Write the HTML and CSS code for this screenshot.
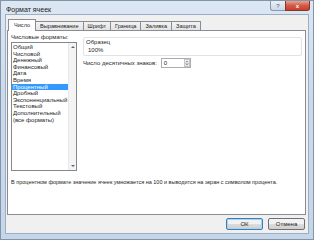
FILE: index.html
```html
<!DOCTYPE html>
<html lang="ru">
<head>
<meta charset="utf-8">
<link rel="stylesheet" href="styles.css">
</head>
<body>
<div class="window">
  <div class="titlebar">
    <span class="title">Формат ячеек</span>
    <div class="caption-btns">
      <span class="cb help">?</span>
      <span class="cb close">x</span>
    </div>
  </div>
  <div class="client">
    <div class="tabs">
      <div class="tab active">Число</div>
      <div class="tab">Выравнивание</div>
      <div class="tab">Шрифт</div>
      <div class="tab">Граница</div>
      <div class="tab">Заливка</div>
      <div class="tab">Защита</div>
    </div>
    <div class="panel">
      <div class="panel-main">
        <div class="left-col">
          <div class="label">Числовые форматы:</div>
          <div class="listbox">
            <ul class="items">
              <li>Общий</li>
              <li>Числовой</li>
              <li>Денежный</li>
              <li>Финансовый</li>
              <li>Дата</li>
              <li>Время</li>
              <li class="selected">Процентный</li>
              <li>Дробный</li>
              <li>Экспоненциальный</li>
              <li>Текстовый</li>
              <li>Дополнительный</li>
              <li>(все форматы)</li>
            </ul>
            <div class="vscroll">
              <span class="arr up"></span>
              <span class="arr down"></span>
            </div>
          </div>
        </div>
        <div class="right-col">
          <div class="sample">
            <div class="sample-title">Образец</div>
            <div class="sample-value">100%</div>
          </div>
          <div class="decimals">
            <span class="dec-label">Число десятичных знаков:</span>
            <div class="spin">
              <span class="spin-val">0</span>
              <div class="spin-btns">
                <span class="sb"><span class="tri-up"></span></span>
                <span class="sb"><span class="tri-down"></span></span>
              </div>
            </div>
          </div>
        </div>
      </div>
      <div class="desc">В процентном формате значение ячеек умножается на 100 и выводится на экран с символом процента.</div>
    </div>
    <div class="buttons">
      <button class="btn ok">ОК</button>
      <button class="btn">Отмена</button>
    </div>
  </div>
</div>
</body>
</html>
```

FILE: styles.css
```css
* { box-sizing: border-box; margin: 0; padding: 0; }
html, body { width: 314px; height: 240px; overflow: hidden; background: #fff; }
body { font-family: "Liberation Sans", Arial, sans-serif; font-size: 6px; color: #262626; }

.window {
  width: 314px;
  height: 240px;
  display: flex;
  flex-direction: column;
  background: linear-gradient(#dce7f4, #cbdaeb 40%, #c6d6e9);
  border: 1px solid #8393a8;
  padding: 0 4px 5px 4px;
}

.titlebar {
  height: 14px;
  display: flex;
  align-items: flex-start;
}
.title {
  font-size: 7px;
  line-height: 7px;
  margin: 5px 0 0 1px;
  color: #1a1a1a;
}
.caption-btns {
  margin-left: auto;
  margin-right: -1px;
  display: flex;
}
.cb {
  height: 10px;
  display: flex;
  align-items: center;
  justify-content: center;
  font-size: 6px;
  line-height: 6px;
  border: 1px solid #8a99ad;
  border-top: none;
}
.help {
  width: 15px;
  background: linear-gradient(#e9f0f8, #cbd9ea);
  color: #4a5a70;
  border-radius: 0 0 0 3px;
  border-right: none;
}
.close {
  width: 25px;
  background: linear-gradient(#e9a392, #d25a46 50%, #c8402c);
  color: #fff;
  border-color: #8a3426;
  border-radius: 0 0 3px 0;
  font-weight: bold;
}

.client {
  flex: 1;
  display: flex;
  flex-direction: column;
  background: #f0f0f0;
  border: 1px solid #9aaec6;
  padding: 4px 3px 3px 1px;
}

.tabs {
  display: flex;
  height: 11px;
  align-items: flex-end;
  padding-left: 1px;
  position: relative;
  z-index: 1;
}
.tab {
  height: 9px;
  line-height: 8px;
  padding: 0 4px;
  border: 1px solid #898c95;
  border-bottom: none;
  border-left: none;
  background: linear-gradient(#f3f3f3, #e3e3e3);
  white-space: nowrap;
  font-size: 5.6px;
}
.tab.active {
  height: 12px;
  margin-bottom: -1px;
  background: #fff;
  border-left: 1px solid #898c95;
  padding: 0 5px;
  line-height: 10px;
}

.panel {
  height: 185px;
  background: #fff;
  border: 1px solid #898c95;
  margin-right: -1px;
  padding: 3px 3px 0 3px;
  display: flex;
  flex-direction: column;
}
.panel-main {
  display: flex;
  gap: 6px;
}
.left-col { width: 66px; }
.label { line-height: 7px; height: 8px; }

.listbox {
  height: 129px;
  border: 1px solid #828790;
  display: flex;
}
.items {
  list-style: none;
  flex: 1;
  padding-top: 1px;
}
.items li {
  height: 6.6px;
  line-height: 6.6px;
  padding-left: 1px;
  white-space: nowrap;
  overflow: hidden;
}
.items li.selected {
  background: #3399ff;
  color: #fff;
}
.vscroll {
  width: 8px;
  background: #f4f4f4;
  border-left: 1px solid #e8e8e8;
  display: flex;
  flex-direction: column;
  justify-content: space-between;
  align-items: center;
  padding: 3px 0;
}
.arr {
  width: 0; height: 0;
  border-left: 2px solid transparent;
  border-right: 2px solid transparent;
}
.arr.up { border-bottom: 2px solid #666; }
.arr.down { border-top: 2px solid #666; }

.right-col {
  flex: 1;
  padding-top: 3px;
}
.sample {
  height: 19px;
  border: 1px solid #dfe3e8;
  border-radius: 2px;
  padding: 1px 0 0 2px;
}
.sample-title { line-height: 7px; }
.sample-value { line-height: 7px; padding-left: 2px; margin-top: 1px; }

.decimals {
  display: flex;
  align-items: center;
  margin-top: 2px;
  gap: 4px;
}
.dec-label { line-height: 7px; }
.spin {
  width: 30px;
  height: 10px;
  border: 1px solid #abadb3;
  display: flex;
  align-items: center;
  background: #fff;
}
.spin-val { flex: 1; padding-left: 2px; line-height: 7px; }
.spin-btns {
  width: 6px;
  height: 8px;
  display: flex;
  flex-direction: column;
}
.sb {
  flex: 1;
  display: flex;
  align-items: center;
  justify-content: center;
  background: linear-gradient(#f4f4f4, #e2e2e2);
  border: 1px solid #c5c5c5;
}
.sb + .sb { border-top: none; }
.tri-up, .tri-down {
  width: 0; height: 0;
  border-left: 1.5px solid transparent;
  border-right: 1.5px solid transparent;
}
.tri-up { border-bottom: 1.5px solid #444; }
.tri-down { border-top: 1.5px solid #444; }

.desc {
  margin-top: auto;
  margin-bottom: 28px;
  line-height: 7px;
  white-space: nowrap;
  font-size: 5.5px;
}

.buttons {
  display: flex;
  justify-content: flex-end;
  gap: 5px;
  margin-top: 3px;
}
.btn {
  width: 37px;
  height: 12px;
  font-family: inherit;
  font-size: 6px;
  color: #262626;
  border: 1px solid #707070;
  border-radius: 2px;
  background: linear-gradient(#f2f2f2 50%, #dddddd 50%, #cfcfcf);
}
.btn.ok {
  border-color: #3c7fb1;
  box-shadow: inset 0 0 0 1px #a6d4f2;
}
```
